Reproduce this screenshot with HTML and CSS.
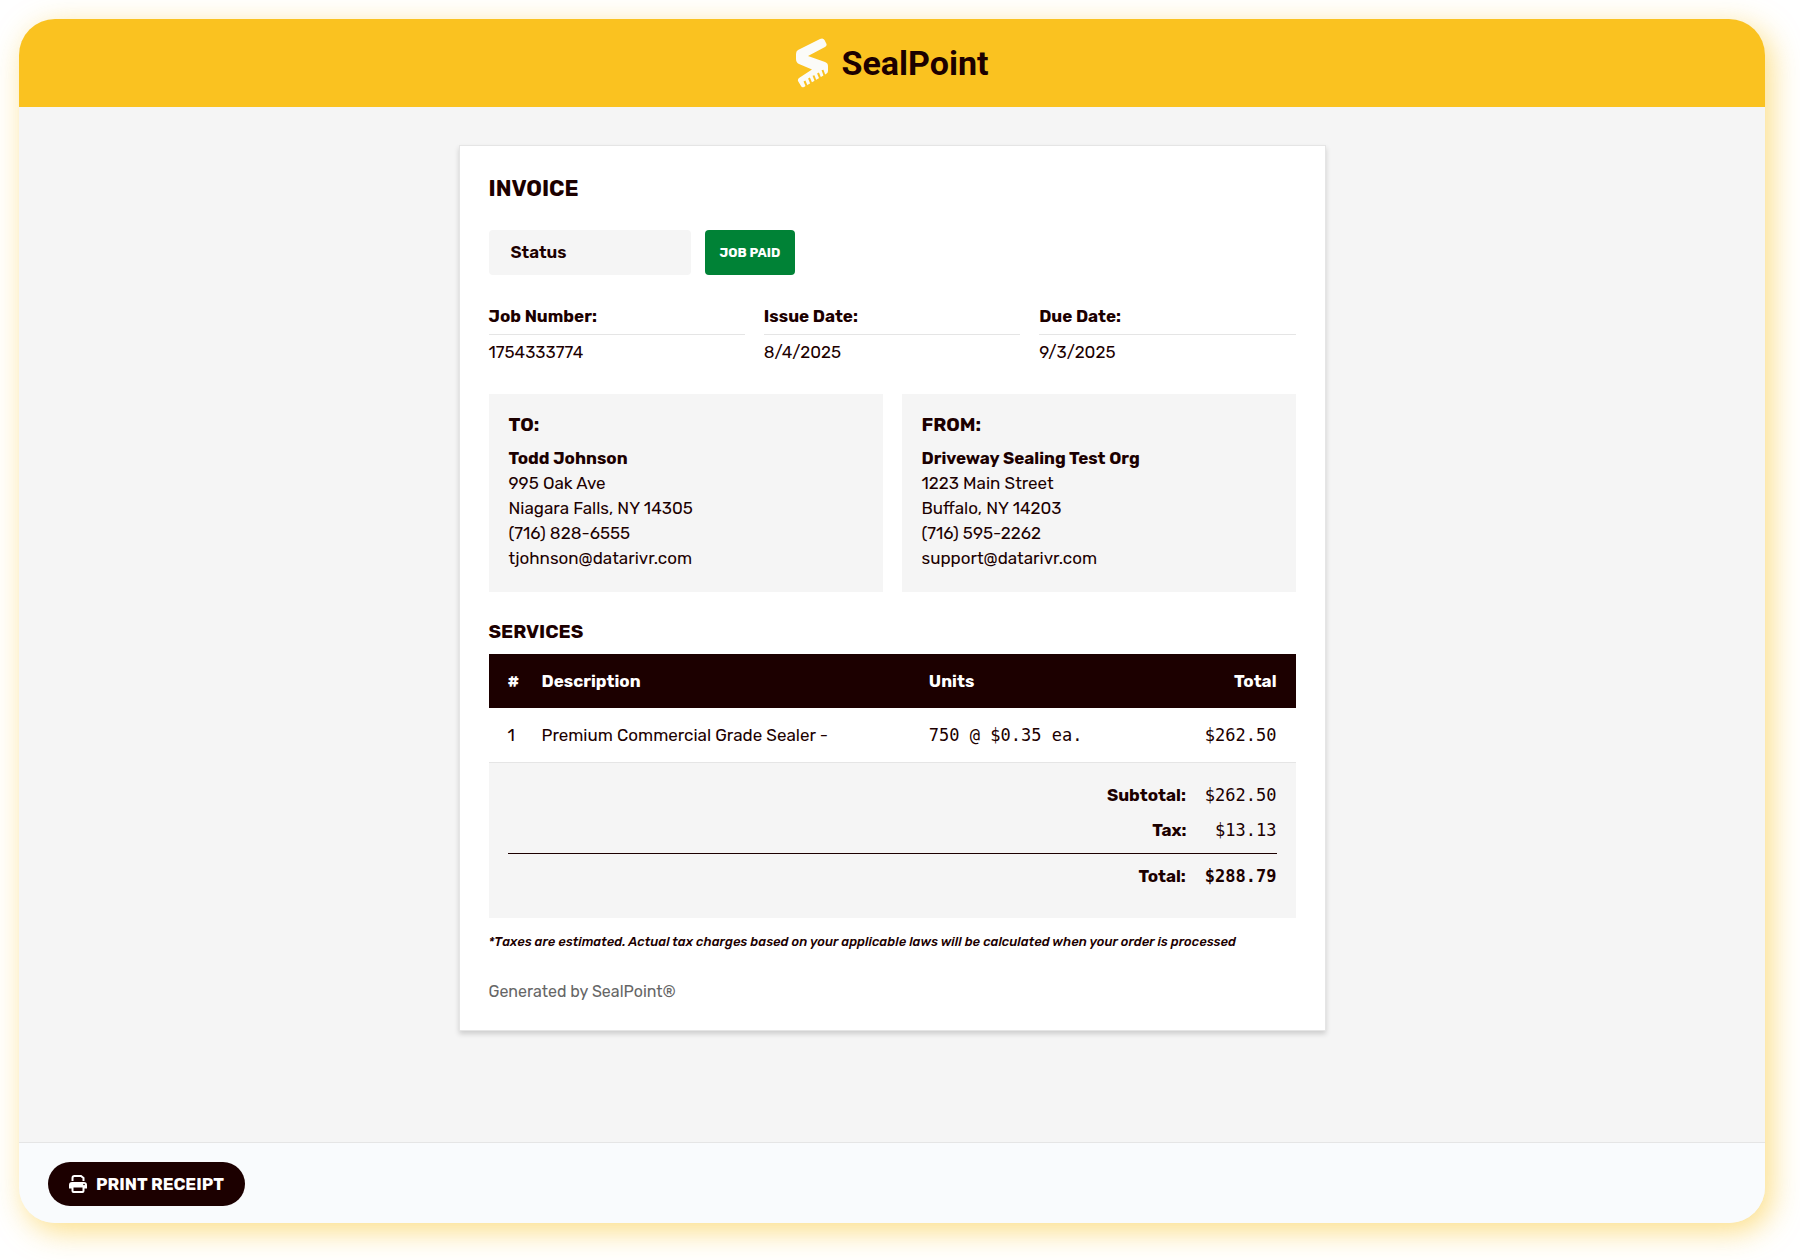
FILE: index.html
```html
<!DOCTYPE html>
<html lang="en">
<head>
    <meta charset="UTF-8">
    <meta name="viewport" content="width=device-width, initial-scale=1.0">
    <title>SealPoint Invoice</title>
    <link rel="stylesheet" href="styles.css">
</head>
<body>
    <div class="window">
        <header class="header">
            <svg class="logo-icon" viewBox="0 0 32 50" aria-hidden="true">
                <path d="M2 12 L24 1 Q27 -.5 28.500 2 L30.500 6 Q31 8 29 9 L12 18 L29 24 Q32 25 32 28 L32 33 Q32 35 30 36 L8 49 Q6 50 5 48 L2 43 Q1.500 41 3 40 L16 31.500 L3 26 Q0 24.500 0 21 L0 16 Q0 13 2 12 Z"/>
                <!-- Brush teeth -->
                <path class="logo-teeth" d="M8.500 43 L11 49 M13 40 L15.500 46 M17.500 37.500 L20 44 M22 35 L24.500 41 M26.500 32 L29 39"/>
            </svg>
            <span class="logo-text">SealPoint</span>
        </header>

        <main class="main">
            <section class="invoice">
                <h1>INVOICE</h1>

                <div class="status-row">
                    <div class="status-label">Status</div>
                    <div class="status-badge">JOB PAID</div>
                </div>

                <!-- Job details -->
                <dl class="details">
                    <div class="detail">
                        <dt>Job Number:</dt>
                        <dd>1754333774</dd>
                    </div>
                    <div class="detail">
                        <dt>Issue Date:</dt>
                        <dd>8/4/2025</dd>
                    </div>
                    <div class="detail">
                        <dt>Due Date:</dt>
                        <dd>9/3/2025</dd>
                    </div>
                </dl>

                <!-- Customer and company -->
                <div class="parties">
                    <div class="party">
                        <h2>TO:</h2>
                        <p><strong>Todd Johnson</strong></p>
                        <p>995 Oak Ave</p>
                        <p>Niagara Falls, NY 14305</p>
                        <p>(716) 828-6555</p>
                        <p>tjohnson@datarivr.com</p>
                    </div>
                    <div class="party">
                        <h2>FROM:</h2>
                        <p><strong>Driveway Sealing Test Org</strong></p>
                        <p>1223 Main Street</p>
                        <p>Buffalo, NY 14203</p>
                        <p>(716) 595-2262</p>
                        <p>support@datarivr.com</p>
                    </div>
                </div>

                <h2>SERVICES</h2>
                <table class="services">
                    <thead>
                        <tr>
                            <th class="col-num">#</th>
                            <th class="col-desc">Description</th>
                            <th>Units</th>
                            <th class="amount">Total</th>
                        </tr>
                    </thead>
                    <tbody>
                        <tr>
                            <td class="col-num">1</td>
                            <td class="col-desc">Premium Commercial Grade Sealer -</td>
                            <td class="mono">750 @ $0.35 ea.</td>
                            <td class="mono amount">$262.50</td>
                        </tr>
                    </tbody>
                </table>

                <div class="totals">
                    <div class="total-row">
                        <strong>Subtotal:</strong>
                        <span class="mono">$262.50</span>
                    </div>
                    <div class="total-row">
                        <strong>Tax:</strong>
                        <span class="mono">$13.13</span>
                    </div>
                    <div class="total-row grand-total">
                        <strong>Total:</strong>
                        <span class="mono">$288.79</span>
                    </div>
                </div>

                <p class="tax-note">*Taxes are estimated. Actual tax charges based on your applicable laws will be calculated when your order is processed</p>
                <p class="generated">Generated by SealPoint®</p>
            </section>
        </main>

        <footer class="footer">
            <button type="button" class="print-button" onclick="window.print()">
                <svg viewBox="0 0 18 18" aria-hidden="true">
                    <path d="M3.500 6 V3 Q3.500 1 5.500 1 H12 L14.500 3 V6" fill="none" stroke="currentColor" stroke-width="2"/>
                    <path d="M3 7 H15 Q18 7 18 10 V13.500 H14 V11.500 H4 V13.500 H0 V10 Q0 7 3 7 Z" fill="currentColor"/>
                    <rect x="3.500" y="11.500" width="11" height="5.500" rx="1" fill="#1c0000" stroke="currentColor" stroke-width="2"/>
                    <circle cx="15" cy="9.500" r=".8" fill="#1c0000"/>
                </svg>
                PRINT RECEIPT
            </button>
        </footer>
    </div>
</body>
</html>
```
FILE: styles.css
```css
* {
    box-sizing: border-box;
}

body {
    margin: 0;
    padding: 19px 35px 37px 19px;
    min-height: 100vh;
    display: flex;
    background-color: #ffffff;
    color: #1c0000;
    font-family: Rubik, Roboto, sans-serif;
    font-size: 17px;
    line-height: 25px;
}

h1, h2, p, dl, dd {
    margin: 0;
}

strong {
    font-weight: 700;
}

.window {
    flex: 1;
    display: flex;
    flex-direction: column;
    border-radius: 36px;
    overflow: hidden;
    background-color: #f5f5f5;
    box-shadow: 6px 8px 30px rgba(250, 194, 32, 0.55);
}

/* Header */
.header {
    display: flex;
    align-items: center;
    justify-content: center;
    gap: 14px;
    height: 88px;
    background-color: #fac220;
}

.logo-icon {
    width: 32px;
    height: 50px;
    fill: #fbfbf8;
}

.logo-teeth {
    fill: none;
    stroke: #fac220;
    stroke-width: 2;
}

.logo-text {
    font-family: Roboto, sans-serif;
    font-size: 34px;
    font-weight: 700;
    line-height: 40px;
}

.main {
    flex: 1;
    padding: 38px 20px;
}

/* Invoice card */
.invoice {
    max-width: 867px;
    margin: 0 auto;
    padding: 29px 29px 26px;
    background-color: #ffffff;
    border: 1px solid #e5e5e5;
    box-shadow: 0 3px 5px rgba(0, 0, 0, 0.16);
}

h1 {
    font-size: 22px;
    line-height: 28px;
    font-weight: 700;
}

h2 {
    font-size: 19px;
    line-height: 24px;
    font-weight: 700;
}

.status-row {
    display: flex;
    gap: 14px;
    margin-top: 27px;
}

.status-label, .status-badge {
    padding: 10px 22px;
    border-radius: 4px;
    font-weight: 600;
}

.status-label {
    width: 202px;
    background-color: #f5f5f5;
}

.status-badge {
    padding: 10px 15px;
    background-color: #008236;
    color: #ffffff;
    font-size: 13px;
    font-weight: 700;
}

.details {
    display: grid;
    grid-template-columns: repeat(3, 1fr);
    gap: 19px;
    margin-top: 29px;
}

.detail dt {
    padding-bottom: 5px;
    border-bottom: 1px solid #e5e5e5;
    font-weight: 700;
}

.detail dd {
    padding-top: 5px;
}

.parties {
    display: grid;
    grid-template-columns: 1fr 1fr;
    gap: 19px;
    margin: 29px 0 28px;
}

.party {
    padding: 19px 20px 21px;
    background-color: #f5f5f5;
}

.party h2 {
    margin-bottom: 9px;
}

/* Services table */
.services {
    width: 100%;
    margin-top: 10px;
    border-collapse: collapse;
}

.services th, .services td {
    padding: 15px 19px 14px 0;
    text-align: left;
}

.services th {
    background-color: #1c0000;
    color: #ffffff;
    font-weight: 700;
}

.services td {
    border-bottom: 1px solid #e5e5e5;
}

.services .col-num {
    width: 53px;
    padding-left: 19px;
}

.services .col-desc {
    width: 48%;
}

.services .amount {
    text-align: right;
}

.mono {
    font-family: "DejaVu Sans Mono", monospace;
    font-size: 17px;
}

/* Totals */
.totals {
    padding: 20px 19px 29px;
    background-color: #f5f5f5;
}

.total-row {
    display: flex;
    justify-content: flex-end;
    gap: 19px;
    padding-bottom: 10px;
}

.total-row .mono {
    min-width: 71px;
    text-align: right;
}

.grand-total {
    padding-top: 10px;
    padding-bottom: 0;
    border-top: 1px solid #1c0000;
    font-weight: 700;
}

.tax-note {
    margin-top: 11px;
    font-size: 13px;
    font-style: italic;
    font-weight: 500;
}

.generated {
    margin-top: 25px;
    font-size: 16px;
    color: #666666;
}

/* Footer */
.footer {
    padding: 19px 29px 17px;
    background-color: #f9fbfd;
    border-top: 1px solid #e5e5e5;
}

.print-button {
    display: flex;
    align-items: center;
    gap: 9px;
    height: 44px;
    padding: 0 21px;
    border: none;
    border-radius: 22px;
    background-color: #1c0000;
    color: #ffffff;
    font-family: inherit;
    font-size: 17px;
    font-weight: 700;
    cursor: pointer;
}

.print-button svg {
    width: 18px;
    height: 18px;
}
```
